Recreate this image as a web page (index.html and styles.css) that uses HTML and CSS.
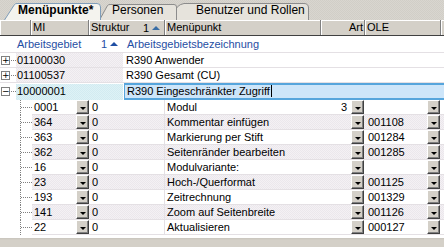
FILE: index.html
```html
<!DOCTYPE html>
<html>
<head>
<meta charset="utf-8">
<link rel="stylesheet" href="styles.css">
</head>
<body>
<div class="tabs">
  <div class="tab tab-active">
    <svg class="tab-shape" width="97" height="20" viewBox="0 0 97 20"><path d="M0.5 20 L10.5 4.5 Q11.5 3.5 13 3.5 L93 3.5 Q96.5 3.5 96.5 7 L96.5 20" fill="#f4f3ee" stroke="#7f9db9"/></svg>
    <span class="tab-label bold">Menüpunkte*</span>
  </div>
  <div class="tab tab-2">
    <svg class="tab-shape" width="78" height="20" viewBox="0 0 78 20"><path d="M0.5 20 L8.5 5.5 Q9.5 4.5 11 4.5 L75 4.5 Q77.5 4.5 77.5 7 L77.5 20" fill="#e6e3dc" stroke="#8c8c8c"/></svg>
    <span class="tab-label">Personen</span>
  </div>
  <div class="tab tab-3">
    <svg class="tab-shape" width="135" height="20" viewBox="0 0 135 20"><path d="M0.5 20 L0.5 14 Q1.5 5 10 3.5 L130 3.5 Q134.5 3.5 134.5 8 L134.5 20" fill="#e6e3dc" stroke="#8c8c8c"/></svg>
    <span class="tab-label">Benutzer und Rollen</span>
  </div>
</div>

<div class="grid">
  <div class="hdr">
    <div class="h h-tree"></div>
    <div class="h h-mi">MI</div>
    <div class="h h-str"><span>Struktur</span><span class="sort">1 <i class="tri-up"></i></span></div>
    <div class="h h-menu">Menüpunkt</div>
    <div class="h h-art">Art</div>
    <div class="h h-ole">OLE</div>
    <div class="h h-end"></div>
  </div>

  <div class="grp">
    <span class="grp-a">Arbeitsgebiet</span>
    <span class="grp-s">1 <i class="tri-up blue"></i></span>
    <span class="grp-b">Arbeitsgebietsbezeichnung</span>
  </div>

  <div class="prow">
    <div class="exp"><span class="box">+</span><span class="dh"></span></div>
    <div class="pc1 chk">01100030</div>
    <div class="pc2">R390 Anwender</div>
  </div>
  <div class="prow">
    <div class="exp"><span class="box">+</span><span class="dh"></span></div>
    <div class="pc1 chk">01100537</div>
    <div class="pc2">R390 Gesamt (CU)</div>
  </div>
  <div class="prow sel">
    <div class="exp"><span class="box">−</span><span class="dh"></span></div>
    <div class="pc1 chk-cyan">10000001</div>
    <div class="pc2 edit">R390 Eingeschränkter Zugriff<span class="caret"></span></div>
  </div>

  <div class="crow">
    <div class="tree first"><span class="dh2"></span></div>
    <div class="c-mi">0001<span class="dd"></span></div>
    <div class="c-str">0</div>
    <div class="c-menu">Modul</div>
    <div class="c-art">3<span class="dd"></span></div>
    <div class="c-ole"><span class="ole-t"></span><span class="dd"></span></div>
  </div>
  <div class="crow chkrow">
    <div class="tree"><span class="dh2"></span></div>
    <div class="c-mi">364<span class="dd"></span></div>
    <div class="c-str">0</div>
    <div class="c-menu">Kommentar einfügen</div>
    <div class="c-art"><span class="dd"></span></div>
    <div class="c-ole"><span class="ole-t">001108</span><span class="dd"></span></div>
  </div>
  <div class="crow">
    <div class="tree"><span class="dh2"></span></div>
    <div class="c-mi">363<span class="dd"></span></div>
    <div class="c-str">0</div>
    <div class="c-menu">Markierung per Stift</div>
    <div class="c-art"><span class="dd"></span></div>
    <div class="c-ole"><span class="ole-t">001284</span><span class="dd"></span></div>
  </div>
  <div class="crow chkrow">
    <div class="tree"><span class="dh2"></span></div>
    <div class="c-mi">362<span class="dd"></span></div>
    <div class="c-str">0</div>
    <div class="c-menu">Seitenränder bearbeiten</div>
    <div class="c-art"><span class="dd"></span></div>
    <div class="c-ole"><span class="ole-t">001285</span><span class="dd"></span></div>
  </div>
  <div class="crow">
    <div class="tree"><span class="dh2"></span></div>
    <div class="c-mi">16<span class="dd"></span></div>
    <div class="c-str">0</div>
    <div class="c-menu">Modulvariante:</div>
    <div class="c-art"><span class="dd"></span></div>
    <div class="c-ole"><span class="ole-t"></span><span class="dd"></span></div>
  </div>
  <div class="crow chkrow">
    <div class="tree"><span class="dh2"></span></div>
    <div class="c-mi">23<span class="dd"></span></div>
    <div class="c-str">0</div>
    <div class="c-menu">Hoch-/Querformat</div>
    <div class="c-art"><span class="dd"></span></div>
    <div class="c-ole"><span class="ole-t">001125</span><span class="dd"></span></div>
  </div>
  <div class="crow">
    <div class="tree"><span class="dh2"></span></div>
    <div class="c-mi">193<span class="dd"></span></div>
    <div class="c-str">0</div>
    <div class="c-menu">Zeitrechnung</div>
    <div class="c-art"><span class="dd"></span></div>
    <div class="c-ole"><span class="ole-t">001329</span><span class="dd"></span></div>
  </div>
  <div class="crow chkrow">
    <div class="tree"><span class="dh2"></span></div>
    <div class="c-mi">141<span class="dd"></span></div>
    <div class="c-str">0</div>
    <div class="c-menu">Zoom auf Seitenbreite</div>
    <div class="c-art"><span class="dd"></span></div>
    <div class="c-ole"><span class="ole-t">001126</span><span class="dd"></span></div>
  </div>
  <div class="crow">
    <div class="tree"><span class="dh2"></span></div>
    <div class="c-mi">22<span class="dd"></span></div>
    <div class="c-str">0</div>
    <div class="c-menu">Aktualisieren</div>
    <div class="c-art"><span class="dd"></span></div>
    <div class="c-ole"><span class="ole-t">000127</span><span class="dd"></span></div>
  </div>
  <div class="bottom"></div>
</div>
</body>
</html>
```

FILE: styles.css
```css
* { box-sizing: border-box; }
html, body { margin: 0; padding: 0; }
body {
  width: 444px;
  height: 247px;
  overflow: hidden;
  background: #fff;
  font-family: "Liberation Sans", Arial, sans-serif;
  font-size: 11px;
  color: #000;
}

/* Tabs */
.tabs {
  display: flex;
  height: 20px;
  padding-left: 4px;
  background: repeating-conic-gradient(#d9d6d0 0 25%, #d1cec7 0 50%) 0 0 / 2px 2px;
  border-bottom: 0;
}
.tab {
  position: relative;
  height: 20px;
  display: flex;
  align-items: flex-end;
  padding-bottom: 3px;
}
.tab-shape { position: absolute; left: 0; top: 0; }
.tab-label { position: relative; line-height: 13px; font-size: 12px; }
.bold { font-weight: bold; }
.tab-active { width: 97px; z-index: 3; padding-left: 14px; }
.tab-2 { width: 78px; margin-left: -2px; z-index: 2; padding-left: 13px; }
.tab-3 { width: 135px; margin-left: -3px; z-index: 1; padding-left: 22px; }

/* Header */
.hdr {
  display: flex;
  height: 16px;
  background: #d4d0c8;
  border-bottom: 1px solid #404040;
}
.h {
  height: 15px;
  line-height: 14px;
  padding-left: 2px;
  border-right: 1px solid #808080;
  box-shadow: inset 1px 1px 0 #fff;
  white-space: nowrap;
  overflow: hidden;
}
.h-tree { width: 31px; }
.h-mi { width: 58px; }
.h-str { width: 76px; display: flex; justify-content: space-between; padding-right: 4px; }
.h-menu { width: 156px; }
.h-art { width: 44px; text-align: right; padding-right: 1px; }
.h-ole { width: 76px; }
.h-end { flex: 1; border-right: 0; }
.sort { display: inline-flex; align-items: center; gap: 3px; }
.tri-up {
  display: inline-block;
  width: 0; height: 0;
  border-left: 4px solid transparent;
  border-right: 4px solid transparent;
  border-bottom: 4px solid #3a6ea5;
}
.tri-up.blue { border-bottom-color: #1f4ea3; }

/* Group row */
.grp {
  display: flex;
  height: 17px;
  line-height: 16px;
  color: #1f4ea3;
  border-bottom: 1px solid #e4e0e4;
}
.grp-a { width: 101px; padding-left: 17px; }
.grp-s { width: 24px; display: inline-flex; align-items: center; gap: 3px; }
.grp-b { padding-left: 2px; }

/* Parent rows */
.prow {
  display: flex;
  height: 15px;
  line-height: 14px;
  border-bottom: 1px solid #e4e0e4;
}
.exp { width: 16px; display: flex; align-items: center; }
.box {
  width: 9px; height: 9px;
  margin-left: 1px;
  border: 1px solid #808080;
  background: #fff;
  font-size: 9px;
  line-height: 7px;
  text-align: center;
  color: #000;
  font-family: "DejaVu Sans", sans-serif;
}
.dh { width: 5px; border-top: 1px dotted #808080; margin-left: 1px; }
.pc1 { width: 108px; padding-left: 1px; border-right: 1px solid #fff; }
.pc2 { flex: 1; padding-left: 2px; }
.chk { background: repeating-conic-gradient(#f4f1f4 0 25%, #ebe7ec 0 50%) 0 0 / 2px 2px; }
.chk-cyan { background: repeating-conic-gradient(#def2f6 0 25%, #d2ebf1 0 50%) 0 0 / 2px 2px; }
.prow.sel { height: 17px; line-height: 15px; border-bottom: 0; }
.sel .pc1 { border-top: 1px solid #fff; }
.edit {
  position: relative;
  background: #cde5f9;
  border-top: 2px solid #56a5dc;
  border-bottom: 2px solid #56a5dc;
  border-left: 1px solid #56a5dc;
  line-height: 12px;
}
.caret { display: inline-block; width: 1px; height: 12px; background: #000; vertical-align: top; margin-left: 1px; }

/* Child rows */
.crow {
  display: flex;
  height: 15px;
  line-height: 14px;
  border-bottom: 1px solid #e4e0e4;
}
.tree {
  width: 32px;
  background: #fff;
  position: relative;
  border-left: 20px solid #fff;
  display: flex;
  align-items: center;
  margin-bottom: -1px;
  background-image: linear-gradient(#808080 50%, transparent 50%);
  background-size: 1px 2px;
  background-repeat: repeat-y;
  background-position: 0 0;
}
.dh2 { width: 11px; margin-left: 1px; border-top: 1px dotted #808080; }
.c-mi { width: 57px; padding-left: 2px; display: flex; justify-content: space-between; }
.c-str { width: 76px; padding-left: 3px; border-right: 1px solid #e4e0e4; }
.c-menu { width: 156px; padding-left: 2px; }
.c-art { width: 44px; display: flex; justify-content: flex-end; align-items: flex-start; gap: 4px; padding-right: 1px; }
.c-ole { width: 79px; display: flex; justify-content: space-between; padding-left: 3px; padding-right: 4px; }
.chkrow .c-mi, .chkrow .c-str, .chkrow .c-menu, .chkrow .c-art, .chkrow .c-ole {
  background: repeating-conic-gradient(#f4f1f4 0 25%, #ebe7ec 0 50%) 0 0 / 2px 2px;
}
.dd {
  width: 13px;
  height: 14px;
  background: #d4d0c8;
  border-top: 1px solid #fff;
  border-left: 1px solid #fff;
  border-right: 1px solid #404040;
  border-bottom: 1px solid #404040;
  box-shadow: inset -1px -1px 0 #808080;
  position: relative;
  flex: none;
}
.dd::after {
  content: "";
  position: absolute;
  left: 3px;
  top: 6px;
  border-left: 3px solid transparent;
  border-right: 3px solid transparent;
  border-top: 3px solid #000;
}
.bottom {
  height: 12px;
  margin-top: 3px;
  background: linear-gradient(#c8c4bc, #d4d0c8 2px);
}
```
